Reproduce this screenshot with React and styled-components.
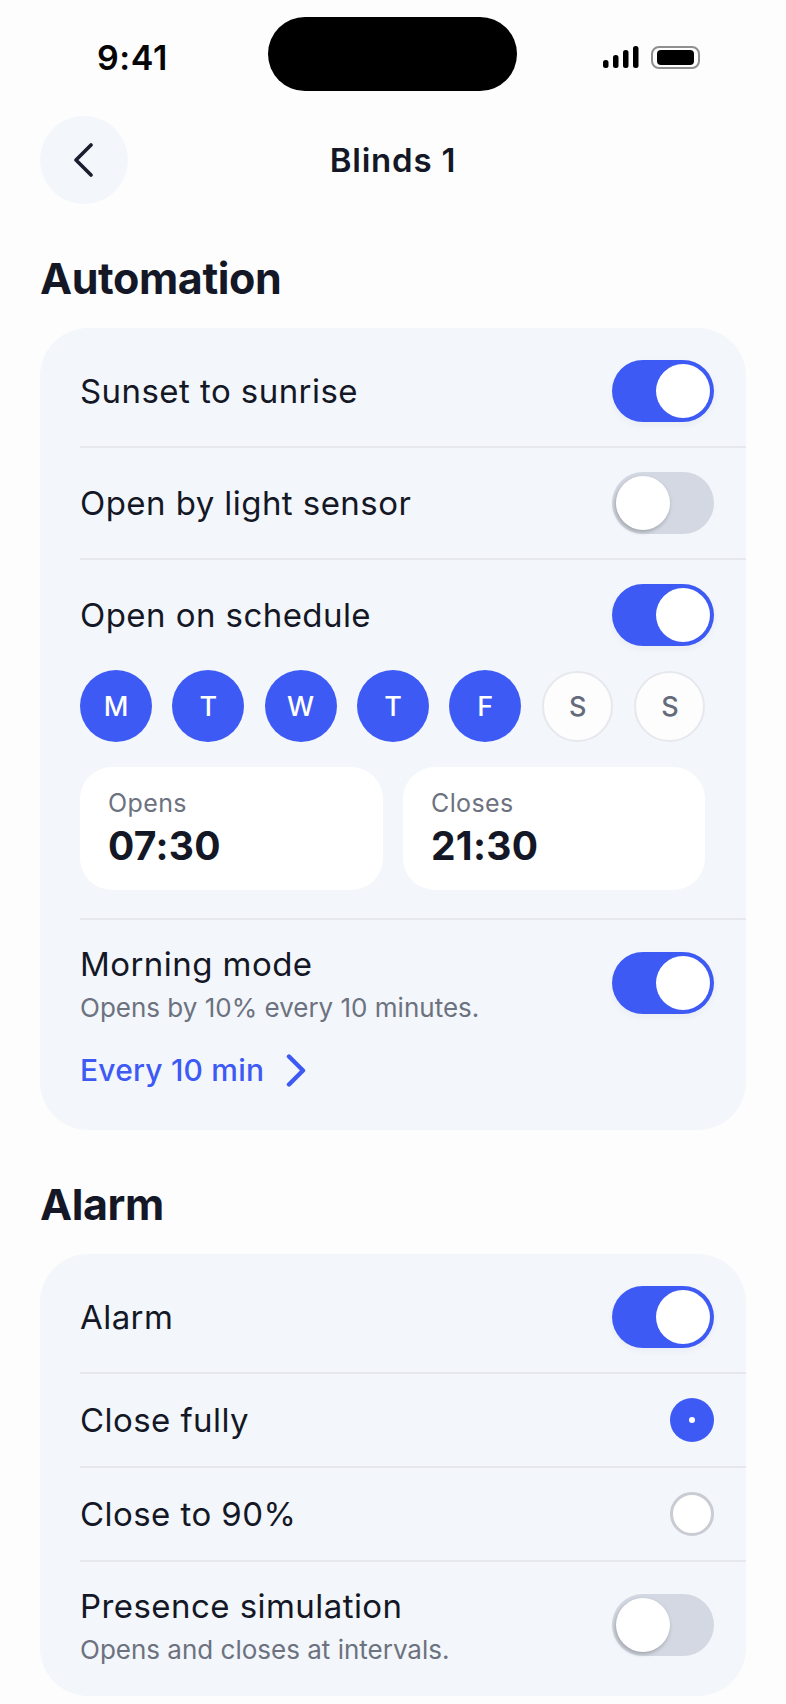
import React from 'react';
import styled, { createGlobalStyle } from 'styled-components';

const GlobalStyle = createGlobalStyle`
  html, body {
    margin: 0;
    padding: 0;
    background: #fdfdfe;
  }
  * {
    box-sizing: border-box;
  }
`;

const Screen = styled.div`
  width: 786px;
  height: 1704px;
  overflow: hidden;
  background: #fdfdfe;
  color: #141826;
  font-family: Inter, 'Noto Sans', sans-serif;
`;

const StatusBar = styled.div`
  display: grid;
  grid-template-columns: 268px 249px 1fr;
  height: 116px;
  padding-top: 17px;
`;

const Time = styled.div`
  padding-left: 97px;
  padding-top: 21px;
  font-size: 34px;
  line-height: 40px;
  font-weight: 600;
  letter-spacing: 0.6px;
  color: #050505;
`;

const Island = styled.div`
  height: 74px;
  border-radius: 37px;
  background: #000;
`;

const StatusIcons = styled.div`
  display: flex;
  justify-content: flex-end;
  align-items: flex-start;
  gap: 12px;
  padding: 29px 86px 0 0;
`;

const Battery = styled.div`
  width: 49px;
  height: 23px;
  padding: 2px 4px;
  border: 2px solid #8f8f8f;
  border-radius: 8px;

  &::before {
    content: '';
    display: block;
    width: 100%;
    height: 100%;
    background: #000;
    border-radius: 4px;
  }
`;

const Header = styled.header`
  display: grid;
  grid-template-columns: 88px 1fr 88px;
  align-items: center;
  padding: 0 40px;
`;

const BackButton = styled.button`
  width: 88px;
  height: 88px;
  padding: 0 3px 0 0;
  border: 0;
  border-radius: 50%;
  background: #f3f6fa;
  display: grid;
  place-items: center;
`;

const Title = styled.h1`
  margin: 0;
  text-align: center;
  font-size: 33px;
  line-height: 40px;
  font-weight: 600;
  letter-spacing: 0.8px;
`;

const Section = styled.section`
  padding: 49px 40px 0;
`;

const SectionTitle = styled.h2`
  margin: 0 0 25px;
  font-size: 43px;
  line-height: 50px;
  font-weight: 700;
  letter-spacing: -0.4px;
`;

const Card = styled.div`
  padding-left: 40px;
  border-radius: 48px;
  background: #f3f6fa;
`;

const Row = styled.div`
  display: flex;
  justify-content: space-between;
  align-items: center;
  padding: ${(p) => p.$top ?? 24}px 32px ${(p) => p.$bottom ?? 24}px 0;
  border-bottom: ${(p) => (p.$plain ? 'none' : '2px solid #e6e8ee')};
`;

const Label = styled.div`
  font-size: 33px;
  line-height: 40px;
  letter-spacing: 0.44px;
`;

const TextBlock = styled.div`
  padding-top: 4px;
`;

const Hint = styled.div`
  margin-top: 6px;
  font-size: 26px;
  line-height: 35px;
  color: #6c7280;
`;

const Track = styled.div`
  display: flex;
  justify-content: ${(p) => (p.$on ? 'flex-end' : 'flex-start')};
  width: 102px;
  height: 62px;
  padding: 4px;
  border-radius: 31px;
  background: ${(p) => (p.$on ? '#3e5af5' : '#d3d8e2')};
  box-shadow: ${(p) => (p.$on ? '0 3px 6px rgba(50, 70, 160, 0.05)' : 'none')};
`;

const Knob = styled.div`
  width: 54px;
  height: 54px;
  border-radius: 50%;
  background: #fff;
  box-shadow: ${(p) => (p.$on ? 'none' : '-1px 2px 4px rgba(0, 0, 0, 0.26)')};
`;

const Switch = ({ on }) => (
  <Track $on={on}>
    <Knob $on={on} />
  </Track>
);

const Schedule = styled.div`
  display: flex;
  flex-direction: column;
  gap: 25px;
  padding: 0 41px 28px 0;
  border-bottom: 2px solid #e6e8ee;
`;

const Days = styled.div`
  display: grid;
  grid-template-columns: repeat(7, 72px);
  justify-content: space-between;
  justify-items: center;
  align-items: center;
  margin-right: -1px;
`;

const Day = styled.div`
  display: grid;
  place-items: center;
  width: ${(p) => (p.$on ? 72 : 71)}px;
  height: ${(p) => (p.$on ? 72 : 71)}px;
  border-radius: 50%;
  font-size: 27px;
  font-weight: 500;
  background: ${(p) => (p.$on ? '#3e5af5' : '#fdfdfe')};
  color: ${(p) => (p.$on ? '#fff' : '#656b7a')};
  border: ${(p) => (p.$on ? 'none' : '2px solid #e6e8ee')};
`;

const TimeCards = styled.div`
  display: grid;
  grid-template-columns: 303px 302px;
  gap: 20px;
`;

const TimeCard = styled.div`
  height: 123px;
  padding: 20px 28px 0;
  border-radius: 32px;
  background: #fff;
`;

const TimeLabel = styled.div`
  font-size: 25px;
  line-height: 32px;
  letter-spacing: 0.4px;
  color: #6c7280;
`;

const TimeValue = styled.div`
  margin-top: 4px;
  font-size: 39px;
  line-height: 46px;
  font-weight: 700;
  letter-spacing: 0.3px;
`;

const EveryLink = styled.a`
  display: flex;
  align-items: center;
  gap: 22px;
  padding-bottom: 40px;
  font-size: 30px;
  line-height: 40px;
  font-weight: 500;
  letter-spacing: 0.2px;
  color: #3e5af5;
`;

const Radio = styled.div`
  display: grid;
  place-items: center;
  width: 44px;
  height: 44px;
  border-radius: 50%;
  background: ${(p) => (p.$on ? '#3e5af5' : '#fff')};
  border: ${(p) => (p.$on ? 'none' : '3px solid #c9ccd3')};

  &::after {
    content: '';
    display: ${(p) => (p.$on ? 'block' : 'none')};
    width: 6px;
    height: 6px;
    border-radius: 50%;
    background: #fff;
  }
`;

const days = [
  { id: 1, name: 'M', on: true },
  { id: 2, name: 'T', on: true },
  { id: 3, name: 'W', on: true },
  { id: 4, name: 'T', on: true },
  { id: 5, name: 'F', on: true },
  { id: 6, name: 'S', on: false },
  { id: 7, name: 'S', on: false },
];

const SignalIcon = () => (
  <svg width="36" height="22" viewBox="0 0 36 22" fill="#000">
    <rect x="0" y="14" width="5.5" height="8" rx="2.5" />
    <rect x="10" y="9" width="5.5" height="13" rx="2.5" />
    <rect x="20" y="4" width="5.5" height="18" rx="2.5" />
    <rect x="30" y="0" width="5.5" height="22" rx="2.5" />
  </svg>
);

const BackIcon = () => (
  <svg width="20" height="34" viewBox="0 0 20 34" fill="none">
    <path d="M18 2 L3 17 L18 32" stroke="#1a1e2e" strokeWidth="3.6" strokeLinecap="round" strokeLinejoin="round" />
  </svg>
);

const ChevronIcon = () => (
  <svg width="20" height="33" viewBox="0 0 20 33" fill="none">
    <path d="M3 2.5 L17 16.5 L3 30.5" stroke="#3e5af5" strokeWidth="4.4" strokeLinecap="round" strokeLinejoin="round" />
  </svg>
);

const App = () => {
  return (
    <Screen>
      <GlobalStyle />
      <StatusBar>
        <Time>9:41</Time>
        <Island />
        <StatusIcons>
          <SignalIcon />
          <Battery />
        </StatusIcons>
      </StatusBar>

      <Header>
        <BackButton aria-label="Back">
          <BackIcon />
        </BackButton>
        <Title>Blinds 1</Title>
      </Header>

      <Section>
        <SectionTitle>Automation</SectionTitle>
        <Card>
          <Row $top={32}>
            <Label>Sunset to sunrise</Label>
            <Switch on />
          </Row>
          <Row>
            <Label>Open by light sensor</Label>
            <Switch />
          </Row>
          <Row $plain>
            <Label>Open on schedule</Label>
            <Switch on />
          </Row>
          <Schedule>
            <Days>
              {days.map((day) => (
                <Day key={day.id} $on={day.on}>{day.name}</Day>
              ))}
            </Days>
            <TimeCards>
              <TimeCard>
                <TimeLabel>Opens</TimeLabel>
                <TimeValue>07:30</TimeValue>
              </TimeCard>
              <TimeCard>
                <TimeLabel>Closes</TimeLabel>
                <TimeValue>21:30</TimeValue>
              </TimeCard>
            </TimeCards>
          </Schedule>
          <Row $plain $top={20} $bottom={25}>
            <TextBlock>
              <Label>Morning mode</Label>
              <Hint>Opens by 10% every 10 minutes.</Hint>
            </TextBlock>
            <Switch on />
          </Row>
          <EveryLink>
            Every 10 min
            <ChevronIcon />
          </EveryLink>
        </Card>
      </Section>

      <Section>
        <SectionTitle>Alarm</SectionTitle>
        <Card>
          <Row $top={32}>
            <Label>Alarm</Label>
            <Switch on />
          </Row>
          <Row>
            <Label>Close fully</Label>
            <Radio $on />
          </Row>
          <Row>
            <Label>Close to 90%</Label>
            <Radio />
          </Row>
          <Row $plain $top={20} $bottom={29}>
            <TextBlock>
              <Label>Presence simulation</Label>
              <Hint>Opens and closes at intervals.</Hint>
            </TextBlock>
            <Switch />
          </Row>
        </Card>
      </Section>
    </Screen>
  );
};

export default App;
